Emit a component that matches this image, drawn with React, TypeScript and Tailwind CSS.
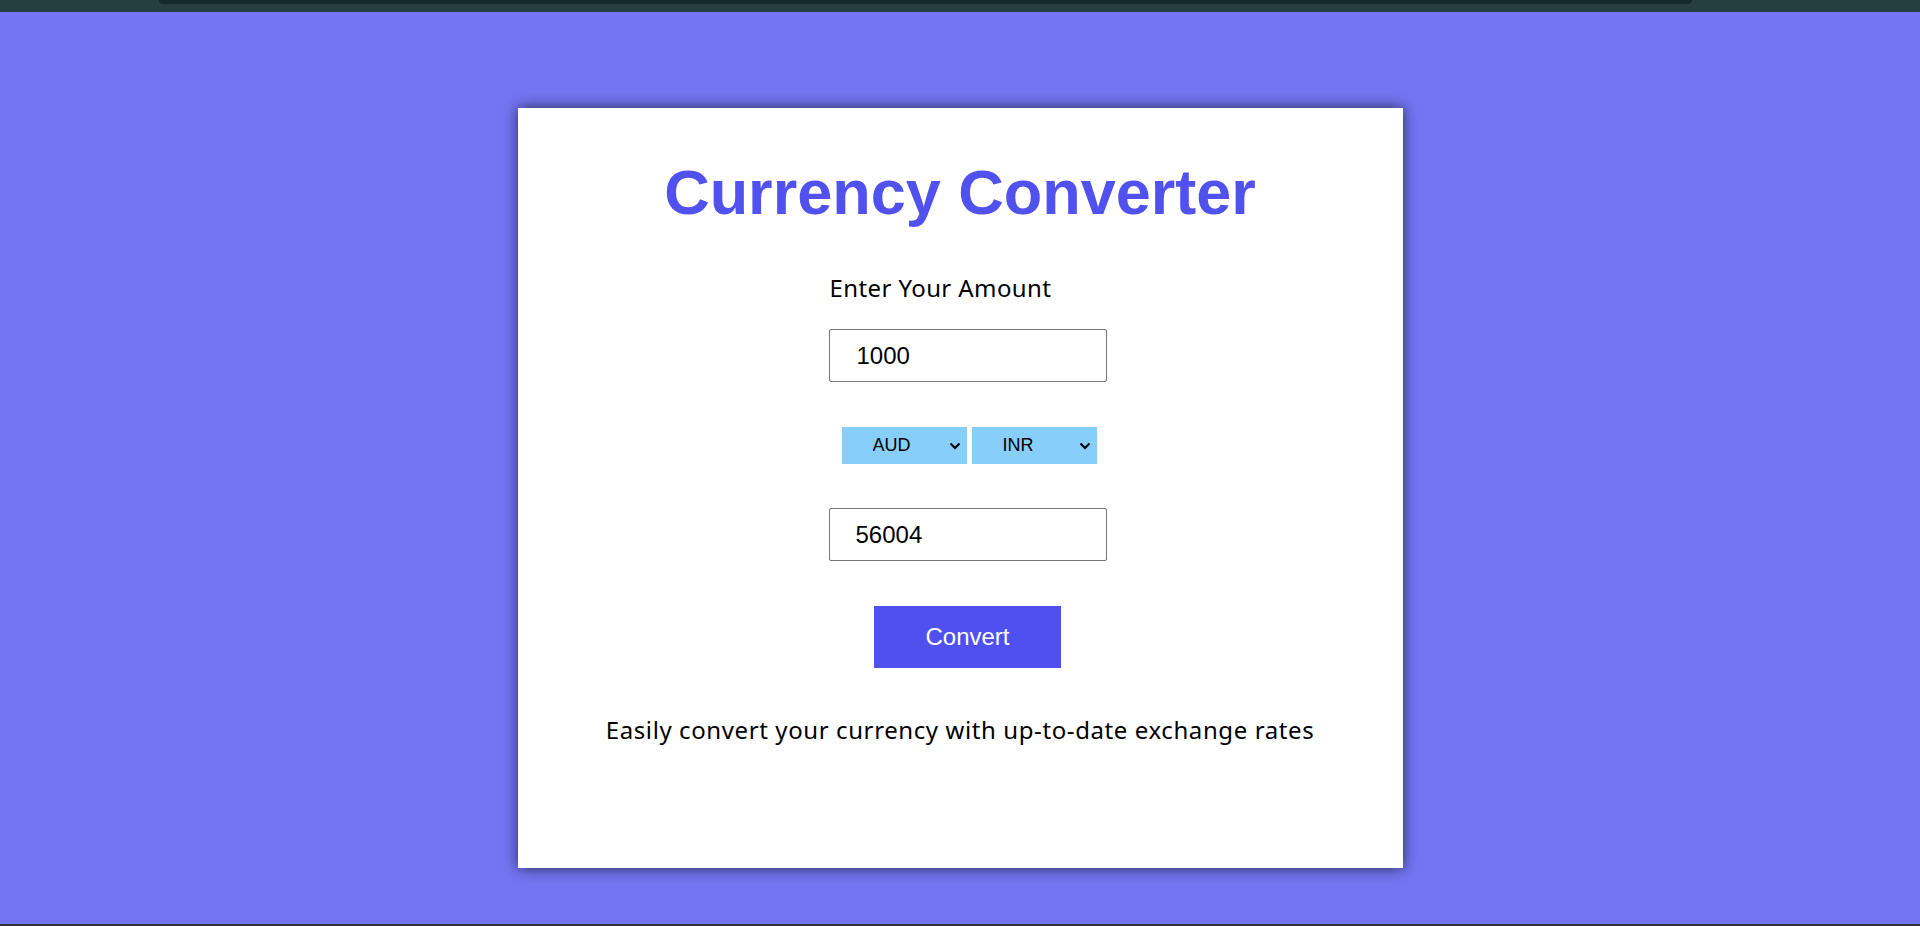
import { useState } from "react";

const currencies = ["AUD", "INR", "USD", "EUR", "GBP", "JPY"];

function CurrencySelect({ value, onChange }: { value: string; onChange: (v: string) => void }) {
  return (
    <div className="relative h-[37px] w-[125px] bg-[#87cefa]">
      <select
        value={value}
        onChange={(e) => onChange(e.target.value)}
        className="h-full w-full cursor-pointer appearance-none border-0 bg-transparent pl-[31px] text-[18px] text-black outline-none [font-family:'Liberation_Sans',Arial,sans-serif]"
      >
        {currencies.map((c) => (
          <option key={c} value={c}>
            {c}
          </option>
        ))}
      </select>
      <svg
        className="pointer-events-none absolute right-[6px] top-[15px]"
        width="12"
        height="8"
        viewBox="0 0 12 8"
        fill="none"
      >
        <polyline points="1.5,1.5 6,6 10.5,1.5" stroke="#000" strokeWidth="2" />
      </svg>
    </div>
  );
}

export default function App() {
  const [amount, setAmount] = useState("1000");
  const [from, setFrom] = useState("AUD");
  const [to, setTo] = useState("INR");
  const [result, setResult] = useState("56004");

  return (
    <div className="flex h-[926px] flex-col overflow-hidden bg-[#7475f2]">
      {/* Browser strip */}
      <div className="h-[12px] shrink-0 bg-[#253f3f] pl-[159px] pr-[228px]">
        <div className="h-[4px] rounded-b-[6px] bg-[#122a2a]" />
      </div>

      <main className="flex-1 pt-[96px]">
        <section className="mx-auto flex h-[760px] w-[885px] flex-col items-center bg-white pt-[52px] shadow-[0_0_14px_rgba(0,0,0,0.65)]">
          <h1 className="text-[63px] font-bold leading-[64px] text-[#5151f0] [font-family:'Liberation_Sans',Arial,sans-serif]">
            Currency Converter
          </h1>

          {/* Form */}
          <div className="ml-[15px] flex w-[278px] flex-col items-center">
            <label className="mt-[52px] self-start pl-px text-[24px] leading-[24px] tracking-[0.4px] text-black [font-family:'Comic_Sans_MS','Noto_Sans',sans-serif]">
              Enter Your Amount
            </label>
            <input
              value={amount}
              onChange={(e) => setAmount(e.target.value)}
              className="mt-[29px] h-[53px] w-[278px] rounded-[2px] border border-[#767676] pl-[27px] text-[24px] text-black outline-none [font-family:'Liberation_Sans',Arial,sans-serif]"
            />
            <div className="mt-[45px] ml-[3px] flex gap-[5px]">
              <CurrencySelect value={from} onChange={setFrom} />
              <CurrencySelect value={to} onChange={setTo} />
            </div>
            <input
              value={result}
              onChange={(e) => setResult(e.target.value)}
              className="mt-[44px] h-[53px] w-[278px] rounded-[2px] border border-[#767676] pl-[26px] text-[24px] text-black outline-none [font-family:'Liberation_Sans',Arial,sans-serif]"
            />
            <button className="mt-[45px] h-[62px] w-[187px] bg-[#5050f0] text-[24px] text-white [font-family:'Liberation_Sans',Arial,sans-serif]">
              Convert
            </button>
          </div>

          <p className="mt-[50px] text-[24px] leading-[24px] tracking-[0.6px] text-black [font-family:'Comic_Sans_MS','Noto_Sans',sans-serif]">
            Easily convert your currency with up-to-date exchange rates
          </p>
        </section>
      </main>

      <div className="h-[2px] shrink-0 bg-[#333333]" />
    </div>
  );
}
